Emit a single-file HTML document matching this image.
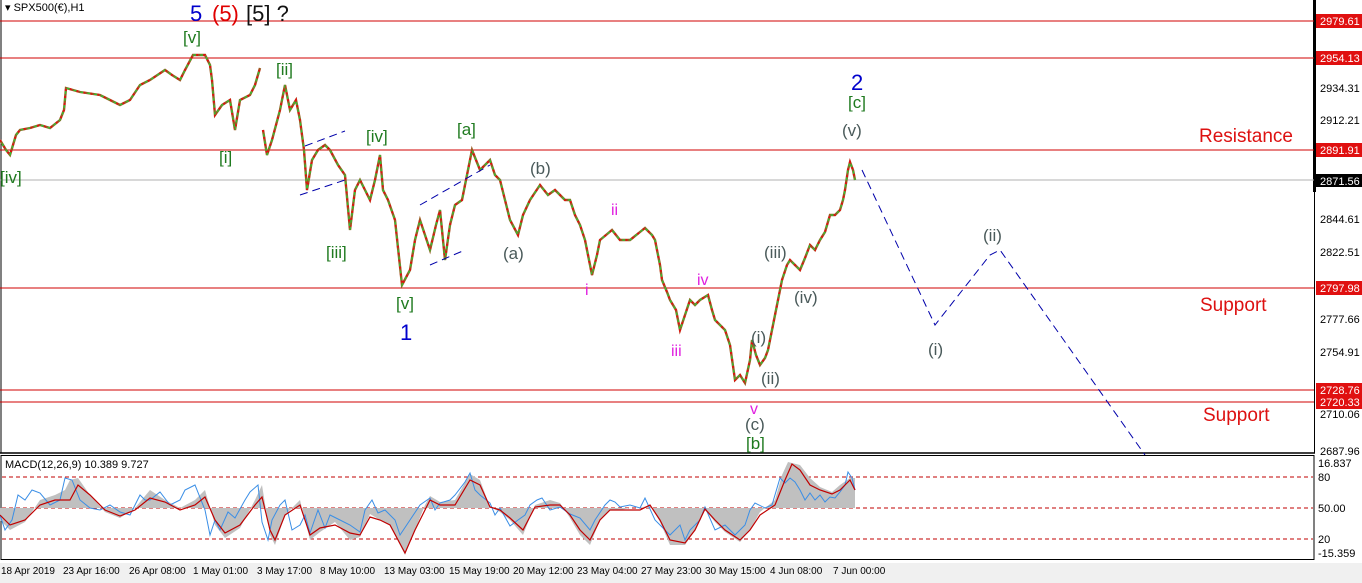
<!DOCTYPE html>
<html><head><meta charset="utf-8"><style>
html,body{margin:0;padding:0;background:#fff;width:1362px;height:583px;overflow:hidden;font-family:"Liberation Sans",sans-serif}
svg{display:block}
</style></head><body>
<svg width="1362" height="583" viewBox="0 0 1362 583" xmlns="http://www.w3.org/2000/svg" font-family="Liberation Sans, sans-serif">
<defs>
<polyline id="p1" fill="none" points="0,140 6,150 10,155 16,135 20,130 30,128 40,125 50,128 60,120 64,110 66,88 80,92 100,95 110,100 120,105 130,100 140,85 150,80 165,70 172,75 180,80 185,70 193,55 205,55 210,65 212,80 215,115 222,105 230,100 235,130 240,100 250,95 255,85 260,68"/>
<polyline id="p2" fill="none" points="263,130 267,155 272,140 280,110 285,85 290,110 296,100 300,120 304,150 307,190 312,160 318,150 325,145 330,150 338,165 345,175 350,230 355,190 360,180 365,190 370,200 375,180 380,155 383,190 388,200 395,220 402,285 410,270 415,240 420,220 425,235 430,250 436,225 440,210 445,260 450,225 455,205 462,200 465,185 472,150 480,170 485,165 490,160 495,175 500,180 505,200 510,220 518,235 523,215 530,200 540,185 548,195 555,190 565,200 570,200 575,215 580,225 585,240 592,275 597,255 600,240 606,235 612,230 620,240 630,240 640,232 645,228 652,235 655,240 660,265 662,280 667,292 670,300 676,310 680,330 685,315 690,300 695,305 700,300 708,295 712,310 715,320 720,325 725,330 730,345 735,380 740,375 745,383 750,360 752,340 756,355 760,365 765,358 768,350 773,325 778,300 782,280 787,265 790,260 795,265 800,270 805,258 810,245 815,250 820,240 825,232 830,215 835,215 840,210 843,200 845,190 848,170 850,162 853,170 855,180"/>
</defs>
<rect width="1362" height="583" fill="#fff"/>
<rect x="0" y="563" width="1362" height="20" fill="#f0f0f0"/>
<line x1="1" y1="0" x2="1" y2="453" stroke="#000"/>
<line x1="0" y1="453" x2="1315" y2="453" stroke="#000" stroke-width="1.5"/>
<line x1="1314.5" y1="0" x2="1314.5" y2="453" stroke="#000"/>
<rect x="1313" y="0" width="3" height="192" fill="#000"/>
<g stroke="#d00000" stroke-width="1">
<line x1="0" y1="21" x2="1314" y2="21"/>
<line x1="0" y1="58" x2="1314" y2="58"/>
<line x1="0" y1="150" x2="1314" y2="150"/>
<line x1="0" y1="288" x2="1314" y2="288"/>
<line x1="0" y1="390" x2="1314" y2="390"/>
<line x1="0" y1="402" x2="1314" y2="402"/>
</g>
<line x1="0" y1="180" x2="1314" y2="180" stroke="#b0b0b0"/>
<!-- price -->
<g stroke-width="2.4">
<use href="#p1" stroke="#9a5a20"/><use href="#p2" stroke="#9a5a20"/>
</g>
<g stroke-width="2" stroke-dasharray="2,5">
<use href="#p1" stroke="#e01010"/><use href="#p2" stroke="#e01010"/>
</g>
<g stroke-width="1.4" stroke-dasharray="3,4" stroke-dashoffset="3">
<use href="#p1" stroke="#33c033"/><use href="#p2" stroke="#33c033"/>
</g>
<g stroke="#0000aa" stroke-dasharray="8,5" stroke-width="1">
<line x1="300" y1="195" x2="345" y2="180"/>
<line x1="305" y1="146" x2="345" y2="131"/>
<line x1="420" y1="205" x2="490" y2="165"/>
<line x1="430" y1="265" x2="465" y2="250"/>
<polyline fill="none" points="862,170 935,325 990,255 1000,250 1145,455"/>
</g>
<g font-size="18">
<text x="190" y="21" fill="#0000cc" font-size="22">5</text>
<text x="212" y="21" fill="#e00000" font-size="22">(5)</text>
<text x="246" y="21" fill="#111" font-size="22">[5] ?</text>
<text x="851" y="90" fill="#0000cc" font-size="22">2</text>
<text x="400" y="340" fill="#0000cc" font-size="22">1</text>
</g>
<g font-size="17" fill="#1f7a1f">
<text x="183" y="43">[v]</text>
<text x="276" y="75">[ii]</text>
<text x="219" y="163">[i]</text>
<text x="0" y="183">[iv]</text>
<text x="366" y="142">[iv]</text>
<text x="457" y="135">[a]</text>
<text x="326" y="258">[iii]</text>
<text x="396" y="309">[v]</text>
<text x="848" y="108">[c]</text>
<text x="746" y="449">[b]</text>
</g>
<g font-size="17" fill="#4a5a5a">
<text x="842" y="136">(v)</text>
<text x="530" y="174">(b)</text>
<text x="503" y="259">(a)</text>
<text x="764" y="258">(iii)</text>
<text x="794" y="303">(iv)</text>
<text x="751" y="343">(i)</text>
<text x="761" y="384">(ii)</text>
<text x="745" y="430">(c)</text>
<text x="928" y="355">(i)</text>
<text x="983" y="241">(ii)</text>
</g>
<g font-size="16" fill="#e020e0">
<text x="611" y="215">ii</text>
<text x="585" y="295">i</text>
<text x="697" y="285">iv</text>
<text x="671" y="356">iii</text>
<text x="750" y="414">v</text>
</g>
<g font-size="19" fill="#dd1111">
<text x="1199" y="142">Resistance</text>
<text x="1200" y="311">Support</text>
<text x="1203" y="421">Support</text>
</g>
<text x="5" y="11" font-size="11" fill="#000">▾  SPX500(€),H1</text>
<g font-size="11" fill="#000">
<text x="1320" y="92">2934.31</text>
<text x="1320" y="124">2912.21</text>
<text x="1320" y="223">2844.61</text>
<text x="1320" y="256">2822.51</text>
<text x="1320" y="323">2777.66</text>
<text x="1320" y="356">2754.91</text>
<text x="1320" y="418">2710.06</text>
<text x="1320" y="455">2687.96</text>
</g>
<g font-size="11" fill="#fff">
<rect x="1316" y="14" width="46" height="14" fill="#e01010"/><text x="1320" y="25">2979.61</text>
<rect x="1316" y="51" width="46" height="14" fill="#e01010"/><text x="1320" y="62">2954.13</text>
<rect x="1316" y="143" width="46" height="14" fill="#e01010"/><text x="1320" y="154">2891.91</text>
<rect x="1316" y="174" width="46" height="13" fill="#000"/><text x="1320" y="185">2871.56</text>
<rect x="1316" y="281" width="46" height="14" fill="#e01010"/><text x="1320" y="292">2797.98</text>
<rect x="1316" y="383" width="46" height="14" fill="#e01010"/><text x="1320" y="394">2728.76</text>
<rect x="1316" y="395" width="46" height="14" fill="#e01010"/><text x="1320" y="406">2720.33</text>
</g>
<rect x="1" y="455.5" width="1313" height="104" fill="none" stroke="#000"/>
<g stroke="#c00000" stroke-dasharray="4,3">
<line x1="2" y1="477" x2="1313" y2="477"/>
<line x1="2" y1="508" x2="1313" y2="508"/>
<line x1="2" y1="539" x2="1313" y2="539"/>
</g>
<polygon fill="#c0c0c0" points="0,508 0,520 10,530 25,522 40,500 55,495 65,490 70,480 78,478 90,495 105,512 120,518 135,508 150,490 165,500 180,508 195,500 205,490 215,525 225,538 240,528 255,500 262,485 270,535 275,545 285,515 300,500 310,540 320,532 335,522 350,540 360,537 370,514 380,520 390,525 405,555 415,530 425,505 430,496 440,502 455,500 470,474 480,480 490,507 500,512 510,520 523,535 535,505 550,500 560,503 570,518 580,535 590,545 600,520 610,510 620,510 630,508 640,508 650,505 660,522 670,545 685,545 695,530 705,510 715,522 725,532 740,542 750,530 760,512 775,500 782,475 788,462 800,465 810,478 820,487 832,492 840,485 850,478 855,478 855,508"/>
<polyline fill="none" stroke="#3a8ee6" stroke-width="1" points="0,515 5,530 12,520 18,495 25,500 32,490 40,493 50,505 60,500 65,478 72,480 80,500 90,508 100,510 110,505 120,512 130,515 135,505 140,495 145,500 150,500 160,492 170,505 180,500 185,490 195,485 205,510 210,535 215,520 220,530 228,512 235,518 245,500 250,492 258,485 262,522 268,540 272,520 280,505 285,500 292,530 300,525 305,515 310,533 318,510 325,528 330,515 340,520 350,525 360,532 365,510 372,500 378,513 385,510 395,520 400,535 410,520 420,505 430,498 435,510 440,503 450,500 455,495 465,482 470,473 475,490 480,495 490,503 495,515 500,508 510,526 518,520 525,515 530,505 537,500 542,498 550,510 560,507 570,514 580,518 590,530 595,520 605,505 610,500 615,502 620,507 630,505 640,508 645,498 655,520 665,530 670,535 680,525 685,540 690,530 700,520 705,507 715,530 725,525 735,535 745,525 750,510 755,503 765,508 772,505 780,478 785,483 790,478 795,482 800,490 805,500 810,493 815,500 820,495 825,502 830,497 835,498 840,492 845,485 848,472 852,478 855,490"/>
<polyline fill="none" stroke="#c00000" stroke-width="1.2" points="0,515 10,525 25,520 40,505 55,500 70,500 78,485 90,495 105,510 120,516 135,510 150,498 165,502 180,510 195,505 205,497 215,520 225,533 240,525 255,505 262,497 270,530 275,540 285,515 300,505 310,535 320,528 335,525 350,533 360,535 370,517 380,520 390,525 405,553 415,530 425,510 430,500 440,505 455,505 470,480 480,485 490,507 500,510 510,518 523,530 535,507 550,505 560,505 570,515 580,530 590,540 600,520 610,510 620,510 630,510 640,510 650,505 660,520 670,540 685,543 695,530 705,509 715,520 725,530 740,540 750,530 760,515 775,505 785,480 792,464 800,470 810,485 820,490 832,494 840,490 850,480 855,490"/>
<text x="5" y="468" font-size="11" fill="#000">MACD(12,26,9) 10.389 9.727</text>
<g font-size="11" fill="#000">
<text x="1318" y="467">16.837</text>
<text x="1318" y="481">80</text>
<text x="1318" y="512">50.00</text>
<text x="1318" y="543">20</text>
<text x="1318" y="557">-15.359</text>
</g>
<g font-size="10" fill="#000">
<text x="1" y="574">18 Apr 2019</text>
<text x="63" y="574">23 Apr 16:00</text>
<text x="129" y="574">26 Apr 08:00</text>
<text x="193" y="574">1 May 01:00</text>
<text x="257" y="574">3 May 17:00</text>
<text x="320" y="574">8 May 10:00</text>
<text x="384" y="574">13 May 03:00</text>
<text x="449" y="574">15 May 19:00</text>
<text x="513" y="574">20 May 12:00</text>
<text x="577" y="574">23 May 04:00</text>
<text x="641" y="574">27 May 23:00</text>
<text x="705" y="574">30 May 15:00</text>
<text x="770" y="574">4 Jun 08:00</text>
<text x="833" y="574">7 Jun 00:00</text>
</g>
</svg>
</body></html>
